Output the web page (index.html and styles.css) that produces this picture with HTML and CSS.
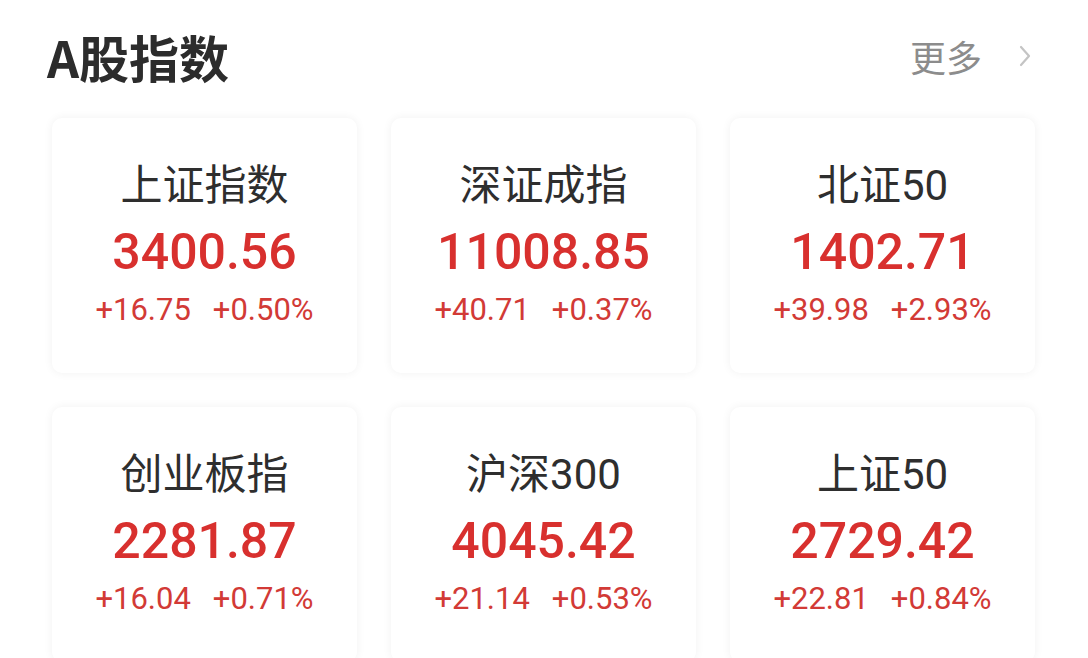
FILE: index.html
```html
<!DOCTYPE html>
<html lang="zh">
<head>
<meta charset="utf-8">
<link rel="stylesheet" href="styles.css">
</head>
<body>
<div class="page">
  <div class="header">
    <h1 class="title">A股指数</h1>
    <div class="more">更多<svg class="chev" viewBox="0 0 14 24" width="14" height="24"><path d="M3 3 L11 12 L3 21" fill="none" stroke="#c4c4c4" stroke-width="2.2" stroke-linecap="round" stroke-linejoin="round"/></svg></div>
  </div>
  <div class="grid">
    <div class="card"><div class="name">上证指数</div><div class="value">3400.56</div><div class="change"><span>+16.75</span><span>+0.50%</span></div></div>
    <div class="card"><div class="name">深证成指</div><div class="value">11008.85</div><div class="change"><span>+40.71</span><span>+0.37%</span></div></div>
    <div class="card"><div class="name">北证50</div><div class="value">1402.71</div><div class="change"><span>+39.98</span><span>+2.93%</span></div></div>
    <div class="card"><div class="name">创业板指</div><div class="value">2281.87</div><div class="change"><span>+16.04</span><span>+0.71%</span></div></div>
    <div class="card"><div class="name">沪深300</div><div class="value">4045.42</div><div class="change"><span>+21.14</span><span>+0.53%</span></div></div>
    <div class="card"><div class="name">上证50</div><div class="value">2729.42</div><div class="change"><span>+22.81</span><span>+0.84%</span></div></div>
  </div>
</div>
</body>
</html>
```
FILE: styles.css
```css
html, body {
  margin: 0;
  padding: 0;
  background: #ffffff;
  height: 100%;
  overflow: hidden;
}
body {
  font-family: Roboto, "Noto Sans CJK SC", sans-serif;
  color: #333333;
}
.page {
  width: 1088px;
}
.header {
  display: flex;
  align-items: center;
  justify-content: space-between;
  padding: 26px 56px 0 47px;
  height: 60px;
}
.title {
  margin: 0;
  font-size: 50px;
  line-height: 60px;
  font-weight: 700;
  color: #2c2c2c;
  font-family: "Noto Sans CJK SC", sans-serif;
}
.more {
  display: flex;
  align-items: center;
  gap: 36px;
  font-size: 36px;
  color: #8c8c8c;
  font-family: "Noto Sans CJK SC", sans-serif;
}
.chev {
  display: block;
}
.grid {
  display: grid;
  grid-template-columns: repeat(3, 305px);
  grid-auto-rows: 255px;
  gap: 34px;
  padding: 32px 52px 0 52px;
}
.card {
  background: #ffffff;
  border-radius: 10px;
  box-shadow: 0 0 10px rgba(0, 0, 0, 0.06);
  display: flex;
  flex-direction: column;
  align-items: center;
  padding-top: 44px;
  box-sizing: border-box;
}
.name {
  font-size: 42px;
  line-height: 48px;
  color: #2e2e2e;
  font-family: Roboto, "Noto Sans CJK SC", sans-serif;
}
.value {
  margin-top: 12px;
  font-size: 50px;
  line-height: 60px;
  font-weight: 500;
  color: #d8302e;
}
.change {
  margin-top: 8px;
  display: flex;
  gap: 22px;
  font-size: 31px;
  line-height: 40px;
  color: #d23a36;
}
```
